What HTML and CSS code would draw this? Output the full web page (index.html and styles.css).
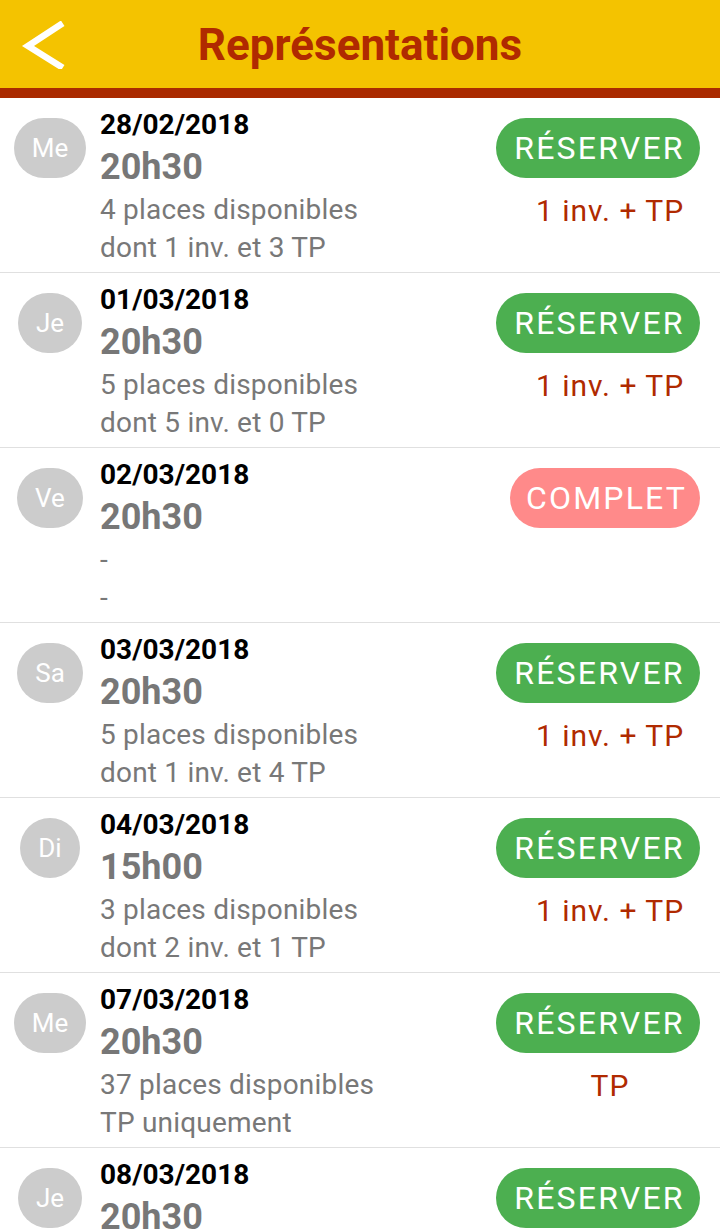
FILE: index.html
```html
<!DOCTYPE html>
<html lang="fr">
<head>
<meta charset="utf-8">
<title>Représentations</title>
<link rel="stylesheet" href="styles.css">
</head>
<body>
<header class="topbar">
  <svg class="back" viewBox="0 0 48 48" width="48" height="48" aria-hidden="true">
    <polyline points="41,4 9,25 41,45" fill="none" stroke="#ffffff" stroke-width="6.5" stroke-linecap="square" stroke-linejoin="miter"/>
  </svg>
  <h1 class="title">Représentations</h1>
</header>
<main class="list">
  <div class="row">
    <div class="daycol"><span class="day">Me</span></div>
    <div class="info">
      <div class="date">28/02/2018</div>
      <div class="time">20h30</div>
      <div class="meta">4 places disponibles</div>
      <div class="meta">dont 1 inv. et 3 TP</div>
    </div>
    <div class="action">
      <span class="btn ok">RÉSERVER</span>
      <span class="note">1 inv. + TP</span>
    </div>
  </div>
  <div class="row">
    <div class="daycol"><span class="day">Je</span></div>
    <div class="info">
      <div class="date">01/03/2018</div>
      <div class="time">20h30</div>
      <div class="meta">5 places disponibles</div>
      <div class="meta">dont 5 inv. et 0 TP</div>
    </div>
    <div class="action">
      <span class="btn ok">RÉSERVER</span>
      <span class="note">1 inv. + TP</span>
    </div>
  </div>
  <div class="row">
    <div class="daycol"><span class="day">Ve</span></div>
    <div class="info">
      <div class="date">02/03/2018</div>
      <div class="time">20h30</div>
      <div class="meta">-</div>
      <div class="meta">-</div>
    </div>
    <div class="action">
      <span class="btn full">COMPLET</span>
    </div>
  </div>
  <div class="row">
    <div class="daycol"><span class="day">Sa</span></div>
    <div class="info">
      <div class="date">03/03/2018</div>
      <div class="time">20h30</div>
      <div class="meta">5 places disponibles</div>
      <div class="meta">dont 1 inv. et 4 TP</div>
    </div>
    <div class="action">
      <span class="btn ok">RÉSERVER</span>
      <span class="note">1 inv. + TP</span>
    </div>
  </div>
  <div class="row">
    <div class="daycol"><span class="day">Di</span></div>
    <div class="info">
      <div class="date">04/03/2018</div>
      <div class="time">15h00</div>
      <div class="meta">3 places disponibles</div>
      <div class="meta">dont 2 inv. et 1 TP</div>
    </div>
    <div class="action">
      <span class="btn ok">RÉSERVER</span>
      <span class="note">1 inv. + TP</span>
    </div>
  </div>
  <div class="row">
    <div class="daycol"><span class="day">Me</span></div>
    <div class="info">
      <div class="date">07/03/2018</div>
      <div class="time">20h30</div>
      <div class="meta">37 places disponibles</div>
      <div class="meta">TP uniquement</div>
    </div>
    <div class="action">
      <span class="btn ok">RÉSERVER</span>
      <span class="note">TP</span>
    </div>
  </div>
  <div class="row">
    <div class="daycol"><span class="day">Je</span></div>
    <div class="info">
      <div class="date">08/03/2018</div>
      <div class="time">20h30</div>
      <div class="meta">5 places disponibles</div>
      <div class="meta">dont 2 inv. et 3 TP</div>
    </div>
    <div class="action">
      <span class="btn ok">RÉSERVER</span>
      <span class="note">1 inv. + TP</span>
    </div>
  </div>
</main>
</body>
</html>
```
FILE: styles.css
```css
html, body {
  margin: 0;
  padding: 0;
}
body {
  width: 720px;
  height: 1230px;
  overflow: hidden;
  background: #ffffff;
  font-family: Roboto, "Liberation Sans", sans-serif;
}
.topbar {
  height: 88px;
  background: #f4c300;
  border-bottom: 10px solid #aa2a00;
  display: flex;
  align-items: center;
  justify-content: center;
  position: relative;
}
.back {
  position: absolute;
  left: 19px;
  top: 21px;
}
.title {
  margin: 0;
  font-size: 44px;
  font-weight: 700;
  color: #b02a00;
  line-height: 1;
  position: relative;
  top: 1px;
}
.list {
  display: flex;
  flex-direction: column;
}
.row {
  height: 175px;
  box-sizing: border-box;
  border-bottom: 1px solid #e0e0e0;
  display: flex;
  padding: 9px 20px 0 0;
}
.daycol {
  width: 100px;
  flex: none;
  display: flex;
  justify-content: center;
  align-items: flex-start;
  padding-top: 11px;
}
.day {
  box-sizing: border-box;
  min-width: 60px;
  height: 60px;
  padding: 0 18px;
  border-radius: 30px;
  background: #cccccc;
  color: #ffffff;
  font-size: 26px;
  display: flex;
  align-items: center;
  justify-content: center;
}
.info {
  flex: 1;
  display: flex;
  flex-direction: column;
}
.date {
  font-size: 28px;
  font-weight: 700;
  color: #000000;
  line-height: 36px;
}
.time {
  font-size: 36px;
  font-weight: 700;
  color: #777777;
  line-height: 48px;
}
.meta {
  font-size: 28px;
  letter-spacing: 0.2px;
  color: #787878;
  line-height: 38px;
}
.action {
  display: flex;
  flex-direction: column;
  align-items: flex-end;
  padding-top: 11px;
}
.btn {
  height: 60px;
  border-radius: 30px;
  box-sizing: border-box;
  display: flex;
  align-items: center;
  justify-content: center;
  color: #ffffff;
  font-size: 32px;
  letter-spacing: 2.2px;
  padding: 0 14px 0 17px;
}
.btn.ok {
  width: 204px;
  background: #4caf50;
}
.btn.full {
  width: 190px;
  background: #ff8a8a;
}
.note {
  width: 180px;
  text-align: center;
  color: #b02a00;
  font-size: 30px;
  letter-spacing: 1px;
  line-height: 38px;
  margin-top: 14px;
}
```
